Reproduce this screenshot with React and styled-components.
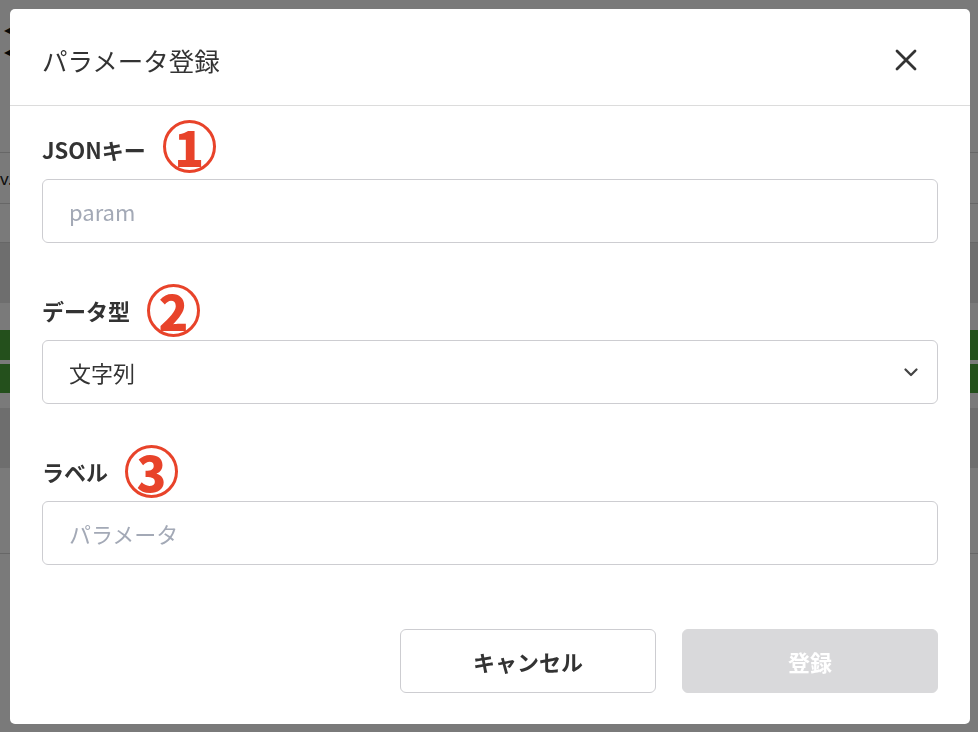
import React from "react";
import styled, { createGlobalStyle } from "styled-components";

const Global = createGlobalStyle`
  html, body { margin: 0; padding: 0; }
  body {
    width: 978px;
    height: 732px;
    overflow: hidden;
    background: #ffffff;
    font-family: "Noto Sans CJK JP", "Noto Sans", sans-serif;
    color: #333;
  }
  * { box-sizing: border-box; }
`;

/* ---------- underlying page (only a sliver is visible) ---------- */
const Page = styled.div`
  width: 978px;
  height: 732px;
  display: flex;
  flex-direction: column;
  background: #ffffff;
`;

const PageHead = styled.div`
  height: 153px;
  padding-top: 22px;
  display: flex;
  flex-direction: column;
  gap: 6px;
  padding-left: 4px;
  border-bottom: 1px solid #d8d8d8;
`;

const Arrow = styled.span`
  font-family: "DejaVu Sans", sans-serif;
  font-size: 12px;
  line-height: 16px;
  color: #111;
`;

const PageRow = styled.div`
  height: ${(p) => p.$h}px;
  background: ${(p) => p.$bg || "#ffffff"};
  border-bottom: ${(p) => (p.$line ? "1px solid #d8d8d8" : "none")};
  margin-bottom: ${(p) => p.$mb || 0}px;
  display: flex;
  align-items: center;
  font-family: "Noto Sans", sans-serif;
  font-size: 17px;
  color: #222;
`;

const Overlay = styled.div`
  position: fixed;
  inset: 0;
  background: rgba(0, 0, 0, 0.52);
  padding: 9px 8px 8px 10px;
  display: flex;
`;

/* ---------- modal ---------- */
const Modal = styled.div`
  width: 960px;
  height: 715px;
  background: #fff;
  border-radius: 5px;
  display: flex;
  flex-direction: column;
  overflow: hidden;
`;

const Header = styled.div`
  height: 97px;
  padding: 6px 32px 0 32px;
  border-bottom: 1px solid #dcdcdc;
  display: flex;
  align-items: center;
  justify-content: space-between;
`;

const Title = styled.h2`
  margin: 0;
  font-size: 25.5px;
  font-weight: 400;
  color: #333;
  line-height: 36px;
`;

const CloseButton = styled.button`
  width: 30px;
  height: 30px;
  margin-right: 17px;
  padding: 0;
  border: none;
  background: none;
  display: flex;
  align-items: center;
  justify-content: center;
  cursor: pointer;
`;

const Body = styled.div`
  padding: 27px 32px 0 32px;
  display: flex;
  flex-direction: column;
  gap: 51px;
`;

const Field = styled.div`
  display: flex;
  flex-direction: column;
  gap: 14px;
`;

const LabelRow = styled.div`
  height: 32px;
  display: flex;
  align-items: center;
`;

const Label = styled.label`
  font-size: 22px;
  font-weight: 700;
  line-height: 32px;
  color: #333;
`;

const Badge = styled.span`
  width: 53px;
  height: 53px;
  flex: none;
  margin: -11px 0 -11px 17px;
  border: 3px solid #e8432a;
  border-radius: 50%;
  display: inline-flex;
  align-items: center;
  justify-content: center;
  color: #e8432a;
  font-family: "Noto Sans CJK JP", "Noto Sans", sans-serif;
  font-size: 49px;
  font-weight: 900;
  line-height: 1;
  padding-bottom: 1px;
  transform: translateY(${(p) => p.$shift || 0}px);
`;

const Input = styled.input`
  width: 100%;
  height: 64px;
  border: 1px solid #cdcdd1;
  border-radius: 6px;
  padding: 0 26px;
  font-family: "Noto Sans CJK JP", "Noto Sans", sans-serif;
  font-size: 22px;
  color: #333;
  background: #fff;
  outline: none;
  &::placeholder { color: #a3a9b6; }
`;

const SelectBox = styled.div`
  width: 100%;
  height: 64px;
  border: 1px solid #cdcdd1;
  border-radius: 6px;
  padding: 0 19px 0 26px;
  display: flex;
  align-items: center;
  justify-content: space-between;
  font-size: 22px;
  color: #333;
`;

const Footer = styled.div`
  margin-top: 64px;
  padding: 0 32px;
  display: flex;
  justify-content: flex-end;
  gap: 26px;
`;

const Button = styled.button`
  width: 256px;
  height: 64px;
  border-radius: 6px;
  font-family: "Noto Sans CJK JP", "Noto Sans", sans-serif;
  font-size: 22px;
  font-weight: 700;
  border: 1px solid ${(p) => (p.$primary ? "#d9d9db" : "#cdcdd1")};
  background: ${(p) => (p.$primary ? "#d9d9db" : "#fff")};
  color: ${(p) => (p.$primary ? "#fff" : "#333")};
  cursor: pointer;
`;

export default function App() {
  return (
    <>
      <Global />
      <Page>
        <PageHead>
          <Arrow>◀</Arrow>
          <Arrow>◀</Arrow>
        </PageHead>
        <PageRow $h={51} $line>v.1.0</PageRow>
        <PageRow $h={39} $line />
        <PageRow $h={60} $bg="#e6e6e6" />
        <PageRow $h={27} />
        <PageRow $h={30} $bg="#4ba73c" $mb={4} />
        <PageRow $h={29} $bg="#4ba73c" />
        <PageRow $h={15} />
        <PageRow $h={60} $bg="#e6e6e6" />
        <PageRow $h={86} $line />
      </Page>
      <Overlay>
        <Modal role="dialog">
          <Header>
            <Title>パラメータ登録</Title>
            <CloseButton aria-label="閉じる">
              <svg width="22" height="22" viewBox="0 0 22 22">
                <path d="M2 2 L20 20 M20 2 L2 20" stroke="#333" strokeWidth="2.8" strokeLinecap="round" />
              </svg>
            </CloseButton>
          </Header>
          <Body>
            <Field>
              <LabelRow>
                <Label>JSONキー</Label>
                <Badge $shift={-3}>1</Badge>
              </LabelRow>
              <Input placeholder="param" />
            </Field>
            <Field>
              <LabelRow>
                <Label>データ型</Label>
                <Badge>2</Badge>
              </LabelRow>
              <SelectBox>
                <span>文字列</span>
                <svg width="14" height="9" viewBox="0 0 14 9">
                  <path d="M1.5 1.5 L7 7 L12.5 1.5" fill="none" stroke="#444" strokeWidth="2.2" strokeLinecap="round" strokeLinejoin="round" />
                </svg>
              </SelectBox>
            </Field>
            <Field>
              <LabelRow>
                <Label>ラベル</Label>
                <Badge>3</Badge>
              </LabelRow>
              <Input placeholder="パラメータ" />
            </Field>
          </Body>
          <Footer>
            <Button>キャンセル</Button>
            <Button $primary>登録</Button>
          </Footer>
        </Modal>
      </Overlay>
    </>
  );
}
